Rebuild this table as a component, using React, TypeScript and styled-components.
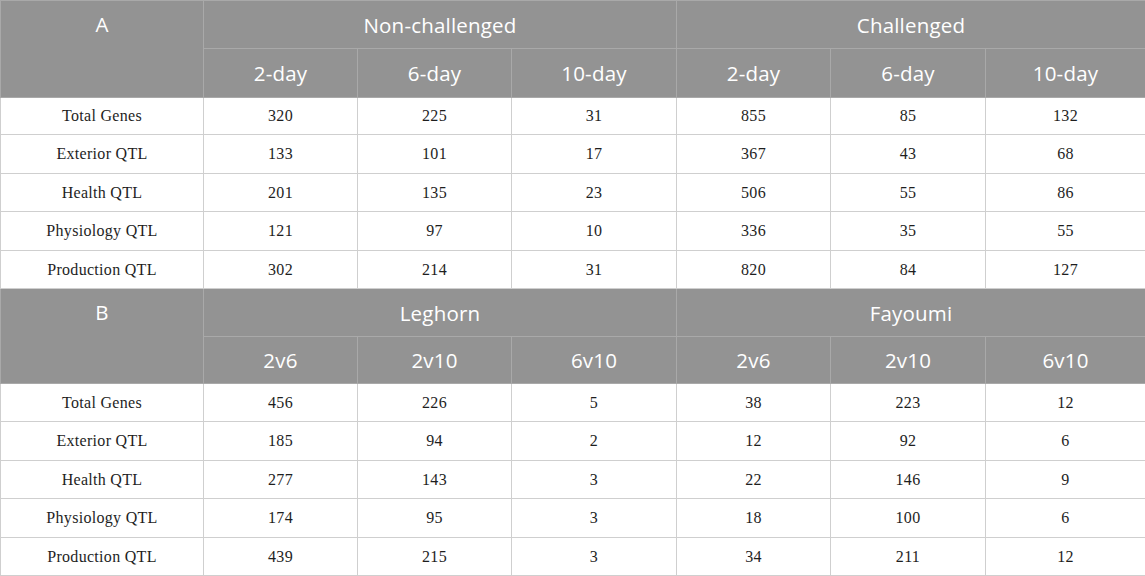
import React from "react";
import styled, { createGlobalStyle } from "styled-components";

const GlobalStyle = createGlobalStyle`
  html, body { margin: 0; padding: 0; background: #ffffff; }
  body { width: 1145px; height: 576px; overflow: hidden; }
`;

const Table = styled.table`
  width: 1145px;
  border-collapse: collapse;
  table-layout: fixed;
  border: 1px solid #c4c4c4;
`;

const HeadRow = styled.tr<{ $h: number }>`
  height: ${(p) => p.$h}px;
  background: #939393;
`;

const BodyRow = styled.tr<{ $h: number }>`
  height: ${(p) => p.$h}px;
  background: #ffffff;
`;

const HeadCell = styled.th<{ $top?: boolean }>`
  padding: ${(p) => (p.$top ? "10px 0 0" : "0")};
  color: #ffffff;
  font-family: "Open Sans", "Noto Sans", sans-serif;
  font-weight: 400;
  font-size: 20.5px;
  letter-spacing: 0.2px;
  text-align: center;
  vertical-align: ${(p) => (p.$top ? "top" : "middle")};
  border: 1px solid #a9a9a9;
  line-height: 26px;
`;

const Cell = styled.td`
  padding: 0;
  color: #1e1e1e;
  font-family: "Liberation Serif", "Times New Roman", serif;
  font-size: 16px;
  letter-spacing: 0.3px;
  line-height: 20px;
  text-align: center;
  vertical-align: middle;
  border: 1px solid #cfcfcf;
`;

const widths = [203, 154, 154, 165, 154, 155, 160];

type Block = {
  label: string;
  groups: [string, string];
  cols: string[];
  rows: [string, number[]][];
  heights: number[];
  head: [number, number];
};

const blocks: Block[] = [
  {
    label: "A",
    groups: ["Non-challenged", "Challenged"],
    cols: ["2-day", "6-day", "10-day", "2-day", "6-day", "10-day"],
    rows: [
      ["Total Genes", [320, 225, 31, 855, 85, 132]],
      ["Exterior QTL", [133, 101, 17, 367, 43, 68]],
      ["Health QTL", [201, 135, 23, 506, 55, 86]],
      ["Physiology QTL", [121, 97, 10, 336, 35, 55]],
      ["Production QTL", [302, 214, 31, 820, 84, 127]],
    ],
    heights: [37, 39, 38, 39, 38],
    head: [48, 49],
  },
  {
    label: "B",
    groups: ["Leghorn", "Fayoumi"],
    cols: ["2v6", "2v10", "6v10", "2v6", "2v10", "6v10"],
    rows: [
      ["Total Genes", [456, 226, 5, 38, 223, 12]],
      ["Exterior QTL", [185, 94, 2, 12, 92, 6]],
      ["Health QTL", [277, 143, 3, 22, 146, 9]],
      ["Physiology QTL", [174, 95, 3, 18, 100, 6]],
      ["Production QTL", [439, 215, 3, 34, 211, 12]],
    ],
    heights: [38, 39, 38, 39, 38],
    head: [48, 47],
  },
];

export default function App() {
  return (
    <>
      <GlobalStyle />
      <Table>
        <colgroup>
          {widths.map((w, i) => (
            <col key={i} style={{ width: w }} />
          ))}
        </colgroup>
        <tbody>
          {blocks.map((b) => (
            <React.Fragment key={b.label}>
              <HeadRow $h={b.head[0]}>
                <HeadCell rowSpan={2} $top>
                  {b.label}
                </HeadCell>
                <HeadCell colSpan={3}>{b.groups[0]}</HeadCell>
                <HeadCell colSpan={3}>{b.groups[1]}</HeadCell>
              </HeadRow>
              <HeadRow $h={b.head[1]}>
                {b.cols.map((c, i) => (
                  <HeadCell key={i}>{c}</HeadCell>
                ))}
              </HeadRow>
              {b.rows.map(([name, vals], ri) => (
                <BodyRow key={name} $h={b.heights[ri]}>
                  <Cell>{name}</Cell>
                  {vals.map((v, i) => (
                    <Cell key={i}>{v}</Cell>
                  ))}
                </BodyRow>
              ))}
            </React.Fragment>
          ))}
        </tbody>
      </Table>
    </>
  );
}
